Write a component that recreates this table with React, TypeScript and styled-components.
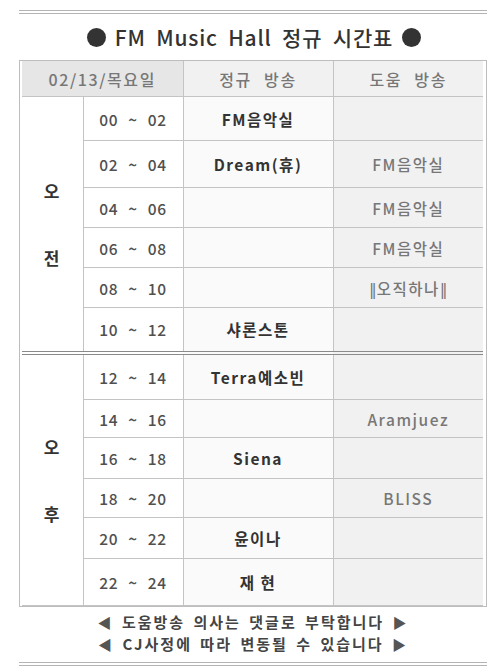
import React from 'react';
import styled, { createGlobalStyle } from 'styled-components';

const GlobalStyle = createGlobalStyle`
  body {
    margin: 0;
    background: #fff;
    font-family: "Noto Sans CJK KR", "Noto Sans", sans-serif;
  }
`;

const Page = styled.div`
  width: 468px;
  padding: 10px 0 0 19px;
`;

const DoubleLine = styled.div`
  height: 2px;
  border-top: 1px solid #b4b4b4;
  border-bottom: 1px solid #b4b4b4;
`;

const Title = styled.div`
  height: 46px;
  display: flex;
  align-items: center;
  justify-content: center;
  gap: 9px;
  color: #333;
  font-size: 21px;
  font-weight: 500;
  word-spacing: 5px;
  letter-spacing: 0.8px;
  padding-left: 2px;
`;

const Dot = styled.span`
  width: 19px;
  height: 19px;
  border-radius: 50%;
  background: #333;
`;

const Frame = styled.div`
  border: 1px solid #bdbdbd;
  padding: 0 3px 0 2px;
`;

const Table = styled.table`
  width: 100%;
  border-collapse: collapse;
  table-layout: fixed;
`;

const Row = styled.tr<{ $h: number; $split?: boolean }>`
  height: ${(p) => p.$h}px;
  & > td {
    ${(p) => (p.$split ? 'border-top: 4px double #8a8a8a;' : '')}
  }
`;

const Head = styled.th<{ $dark?: boolean }>`
  height: 35px;
  padding: 0;
  border: 1px solid #c4c4c4;
  border-top: none;
  background: ${(p) => (p.$dark ? '#e6e6e6' : '#f1f1f1')};
  color: #777;
  font-size: 16px;
  font-weight: 500;
  letter-spacing: 1.6px;
  word-spacing: 7px;
  text-align: center;
  &:first-child {
    border-left: none;
  }
  &:last-child {
    border-right: none;
  }
`;

const Cell = styled.td<{ $kind: 'time' | 'main' | 'help' | 'side' }>`
  padding: 0;
  border: 1px solid #c4c4c4;
  text-align: center;
  font-size: ${(p) => (p.$kind === 'side' ? '17px' : '15.5px')};
  font-weight: ${(p) => (p.$kind === 'main' || p.$kind === 'side' ? 700 : 500)};
  color: ${(p) =>
    p.$kind === 'time' ? '#505050' : p.$kind === 'help' ? '#777' : '#333'};
  background: ${(p) =>
    p.$kind === 'main' ? '#fafafa' : p.$kind === 'help' ? '#f1f1f1' : '#fff'};
  letter-spacing: ${(p) => (p.$kind === 'time' ? '0.6px' : '1.5px')};
  word-spacing: ${(p) => (p.$kind === 'time' ? '6px' : '0')};
  &:first-child {
    border-left: none;
  }
  &:last-child {
    border-right: none;
  }
`;

const Bar = styled.span`
  font-family: "DejaVu Sans", sans-serif;
  letter-spacing: 0;
`;

const Side = styled.div`
  display: flex;
  flex-direction: column;
  align-items: center;
  gap: 44px;
  line-height: 23px;
`;

const Notice = styled.div`
  padding: 4px 0 7px;
  text-align: center;
  color: #444;
  font-size: 15px;
  font-weight: 700;
  line-height: 21px;
  letter-spacing: 2px;
  word-spacing: 3px;
`;

const Tri = styled.span`
  font-size: 14px;
  color: #555;
`;

type Slot = { time: string; main: string; help: React.ReactNode; h: number };

const am: Slot[] = [
  { time: '00 ~ 02', main: 'FM음악실', help: '', h: 44 },
  { time: '02 ~ 04', main: 'Dream(휴)', help: 'FM음악실', h: 47 },
  { time: '04 ~ 06', main: '', help: 'FM음악실', h: 40 },
  { time: '06 ~ 08', main: '', help: 'FM음악실', h: 40 },
  {
    time: '08 ~ 10',
    main: '',
    help: (
      <>
        <Bar>‖</Bar>오직하나<Bar>‖</Bar>
      </>
    ),
    h: 40,
  },
  { time: '10 ~ 12', main: '샤론스톤', help: '', h: 45 },
];

const pm: Slot[] = [
  { time: '12 ~ 14', main: 'Terra예소빈', help: '', h: 47 },
  { time: '14 ~ 16', main: '', help: 'Aramjuez', h: 38 },
  { time: '16 ~ 18', main: 'Siena', help: '', h: 41 },
  { time: '18 ~ 20', main: '', help: 'BLISS', h: 39 },
  { time: '20 ~ 22', main: '윤이나', help: '', h: 41 },
  { time: '22 ~ 24', main: '재 현', help: '', h: 47 },
];

const Block = ({ rows, label, split }: { rows: Slot[]; label: [string, string]; split?: boolean }) => (
  <>
    {rows.map((r, i) => (
      <Row key={r.time} $h={r.h} $split={split && i === 0}>
        {i === 0 && (
          <Cell $kind="side" rowSpan={rows.length}>
            <Side>
              <span>{label[0]}</span>
              <span>{label[1]}</span>
            </Side>
          </Cell>
        )}
        <Cell $kind="time">{r.time}</Cell>
        <Cell $kind="main">{r.main}</Cell>
        <Cell $kind="help">{r.help}</Cell>
      </Row>
    ))}
  </>
);

const App: React.FC = () => {
  return (
    <>
      <GlobalStyle />
      <Page>
        <DoubleLine />
        <Title>
          <Dot />
          FM Music Hall 정규 시간표
          <Dot />
        </Title>
        <Frame>
          <Table>
            <colgroup>
              <col style={{ width: 61 }} />
              <col style={{ width: 100 }} />
              <col style={{ width: 150 }} />
              <col style={{ width: 150 }} />
            </colgroup>
            <thead>
              <tr>
                <Head $dark colSpan={2}>02/13/목요일</Head>
                <Head>정규 방송</Head>
                <Head>도움 방송</Head>
              </tr>
            </thead>
            <tbody>
              <Block rows={am} label={['오', '전']} />
              <Block rows={pm} label={['오', '후']} split />
            </tbody>
          </Table>
        </Frame>
        <Notice>
          <div><Tri>◀</Tri> 도움방송 의사는 댓글로 부탁합니다 <Tri>▶</Tri></div>
          <div><Tri>◀</Tri> CJ사정에 따라 변동될 수 있습니다 <Tri>▶</Tri></div>
        </Notice>
        <DoubleLine />
      </Page>
    </>
  );
};

export default App;
